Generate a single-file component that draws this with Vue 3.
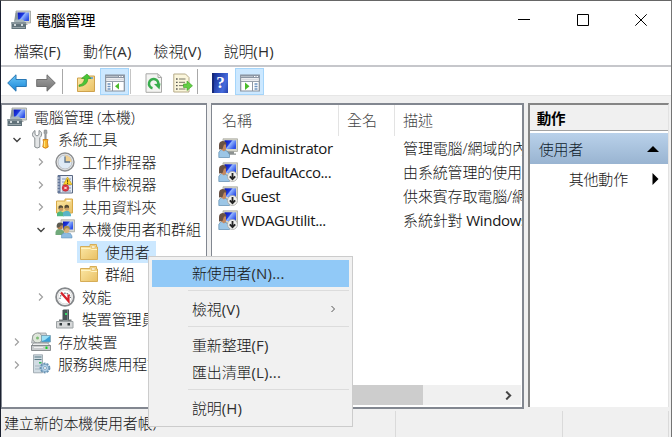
<script setup>
const menus = [['檔案', '(F)'], ['動作', '(A)'], ['檢視', '(V)'], ['說明', '(H)']]
const tree = [
  { level: 0, icon: 'computer', label: '電腦管理 (本機)' },
  { level: 1, icon: 'tools', label: '系統工具', state: 'open' },
  { level: 2, icon: 'clock', label: '工作排程器', state: 'closed' },
  { level: 2, icon: 'event', label: '事件檢視器', state: 'closed' },
  { level: 2, icon: 'share', label: '共用資料夾', state: 'closed' },
  { level: 2, icon: 'users', label: '本機使用者和群組', state: 'open' },
  { level: 3, icon: 'folder', label: '使用者', selected: true },
  { level: 3, icon: 'folder', label: '群組' },
  { level: 2, icon: 'perf', label: '效能', state: 'closed' },
  { level: 2, icon: 'device', label: '裝置管理員' },
  { level: 1, icon: 'storage', label: '存放裝置', state: 'closed' },
  { level: 1, icon: 'services', label: '服務與應用程式', state: 'closed' },
]
const users = [
  { name: 'Administrator', desc: '管理電腦/網域的內', icon: 'user' },
  { name: 'DefaultAcco...', desc: '由系統管理的使用', icon: 'userdown' },
  { name: 'Guest', desc: '供來賓存取電腦/網', icon: 'userdown' },
  { name: 'WDAGUtilit...', desc: '系統針對 ', latin: 'Windows', icon: 'userdown' },
]
const context = [
  { label: '新使用者', key: '(N)...', active: true },
  { sep: true },
  { label: '檢視', key: '(V)', sub: true },
  { sep: true },
  { label: '重新整理', key: '(F)' },
  { label: '匯出清單', key: '(L)...' },
  { sep: true },
  { label: '說明', key: '(H)' },
]
</script>

<template>
  <div class="window">
    <svg class="defs" width="0" height="0">
      <defs>
        <linearGradient id="gBlue" x1="0" y1="0" x2="1" y2="0.6">
          <stop offset="0" stop-color="#0a14b4" /><stop offset="0.45" stop-color="#1c38e0" /><stop offset="0.55" stop-color="#8fb2ff" /><stop offset="1" stop-color="#2f52e8" />
        </linearGradient>
        <linearGradient id="gFolder" x1="0" y1="0" x2="1" y2="1">
          <stop offset="0" stop-color="#fdeaaa" /><stop offset="1" stop-color="#e9c063" />
        </linearGradient>
        <linearGradient id="gBack" x1="0" y1="0" x2="0" y2="1">
          <stop offset="0" stop-color="#6cc8f8" /><stop offset="1" stop-color="#1583d6" />
        </linearGradient>
        <linearGradient id="gFwd" x1="0" y1="0" x2="0" y2="1">
          <stop offset="0" stop-color="#a5a5a5" /><stop offset="1" stop-color="#707070" />
        </linearGradient>
      </defs>
      <symbol id="computer" viewBox="0 0 20 20">
        <path d="M5 1h14.500v12H5z" fill="#d3d5cf" stroke="#9a9f9c" stroke-width=".8" />
        <path d="M6.500 2.500h11.500v8.500H6.500z" fill="url(#gBlue)" />
        <path d="M4.500 3l1.500-1 1 7-4 3z" fill="#8a9799" />
        <path d="M9 13h6l2 2H7z" fill="#a4a8a8" />
        <path d="M3 12l2-2.500h7l2 2.500z" fill="#a8b6ba" />
        <path d="M.5 12h14.500v7H.5z" fill="#61727a" />
        <path d="M.5 12h14.500v2H.5z" fill="#849298" />
        <path d="M3 14h2v2H3zM10 14h2v2h-2z" fill="#d0d8da" />
        <path d="M1.500 17.500h12.500" stroke="#98a5aa" stroke-width="1" />
      </symbol>
      <symbol id="tools" viewBox="0 0 20 20">
        <path d="M3 1.500v4l2 1.500 2-1.500v-4c2 .8 3 2.300 2.500 4.500-.3 1.500-1 2-1.700 2.700V18q-2.800 2-5 0V9C.8 8 0 6 .8 4q.6-1.700 2.200-2.500z" transform="translate(1 0)" fill="#e3e5e6" stroke="#7c8286" stroke-width=".9" />
        <path d="M13.300 1h2.400l.4 3-.9 1.500V11h-1.400V5.500l-.9-1.500z" fill="#a0a5a8" stroke="#777" stroke-width=".5" />
        <path d="M12 10.500h5l-.6 2.500.8 5q-2.700 2.500-5.400 0l.8-5z" fill="#f8b52c" stroke="#ca7710" stroke-width=".8" />
        <path d="M13.500 12v6" stroke="#ffe67d" stroke-width="1.200" />
      </symbol>
      <symbol id="clock" viewBox="0 0 20 20">
        <circle cx="10" cy="10" r="9" fill="#ebecec" stroke="#8b8d8f" stroke-width="1.400" />
        <circle cx="10" cy="10" r="7" fill="#dfeaf5" stroke="#b0b3b6" stroke-width=".8" />
        <path d="M10 3.300a6.700 6.700 0 0 1 6.700 6.700H10z" fill="#efcf91" />
        <path d="M10 4.500V10h5" fill="none" stroke="#59728c" stroke-width="1.300" />
      </symbol>
      <symbol id="event" viewBox="0 0 20 20">
        <path d="M3 1.500h14.500v17.500H3z" fill="#e4eaf3" stroke="#5a6983" stroke-width="1" />
        <path d="M3 1.500h2.500v17.500H3z" fill="#63779b" />
        <path d="M1.500 4h3M1.500 7h3M1.500 10h3M1.500 13h3M1.500 16h3" stroke="#d9dee5" stroke-width="1.200" />
        <path d="M7 5h9M7 8h9M7 11h9M7 14h9M7 17h9" stroke="#8497b8" stroke-width="1" />
        <path d="M12.500 3l4.500 7.500H8.500z" fill="#ffd42c" stroke="#c59b08" stroke-width=".6" />
        <path d="M12.600 5.500v3M12.600 9v1" stroke="#53430a" stroke-width="1" />
        <circle cx="10.500" cy="14" r="3.300" fill="#d93542" stroke="#b51d2b" stroke-width=".5" />
        <path d="M9.300 12.800l2.400 2.400M11.700 12.800l-2.400 2.400" stroke="#fff" stroke-width="1" />
      </symbol>
      <symbol id="folder" viewBox="0 0 20 20">
        <path d="M1.500 4.500H11V2.500h6.500v2.500H18.500v12.500H1.500z" fill="url(#gFolder)" stroke="#d6ad57" stroke-width="1" />
        <path d="M12.500 4h3.500v2h-3.500z" fill="#fffdf0" stroke="#d6ad57" stroke-width=".5" />
        <path d="M2 6.500h9l1.500 1H18" stroke="#fff4c4" stroke-width="1" fill="none" />
      </symbol>
      <symbol id="share" viewBox="0 0 20 20">
        <path d="M1.500 4H10V2h7.500v14H1.500z" fill="url(#gFolder)" stroke="#d7a947" stroke-width="1" />
        <path d="M11.500 3.700h4" stroke="#fff" stroke-width="1.500" />
        <circle cx="6" cy="12" r="2.300" fill="#c79a63" /><path d="M3.500 12V9.500q2-2.500 4.500 0V11l-2-.5z" fill="#534b38" />
        <circle cx="12" cy="11.500" r="2.300" fill="#c99f67" /><path d="M9.500 11.500V9q2-2.500 4.500 0v2l-2-.5z" fill="#554a35" />
        <path d="M2 19.300v-3q2-2.500 4-2l3 2v3z" fill="#50b781" /><path d="M8 19.300v-4q3-2.500 6-1l2 3v2z" fill="#5ab4c6" />
      </symbol>
      <symbol id="users" viewBox="0 0 20 20">
        <path d="M6 .8h13.500v12H6z" fill="#d9dad1" stroke="#a6a69e" stroke-width=".8" />
        <path d="M8 2.500h10v8H8z" fill="url(#gBlue)" />
        <path d="M.5 16v-3q1-3.500 4.500-3l4 2v4z" fill="#71a97b" />
        <circle cx="5" cy="7.500" r="2.900" fill="#b98552" /><path d="M1.700 8.500q-.5-5 3.300-5 3.500 0 3.500 3L6 6.500l-2 2z" fill="#5c5a50" />
        <path d="M6.500 19v-3q1-2.500 5-2.500l4 1 1.500 2.500v2z" fill="#8dbbe1" stroke="#5689b5" stroke-width=".5" />
        <circle cx="11.500" cy="11" r="2.900" fill="#d9b37d" /><path d="M8.300 11q0-4.500 3.500-4.200 3.200.3 3 3.500l-2-1-2 0-1.500 2.500z" fill="#a68d4e" />
      </symbol>
      <symbol id="perf" viewBox="0 0 20 20">
        <circle cx="10" cy="10" r="8.900" fill="#fff" stroke="#85888b" stroke-width="1.800" />
        <circle cx="10" cy="10" r="7" fill="#fff" stroke="#cecece" stroke-width=".8" />
        <path d="M5 12a5.200 5.200 0 0 1 10.500-1" fill="none" stroke="#717c82" stroke-width="1.300" stroke-dasharray="1.500 1" />
        <path d="M6 5.500L13.500 14V7.500" fill="none" stroke="#d51f29" stroke-width="2.200" />
      </symbol>
      <symbol id="device" viewBox="0 0 20 20">
        <path d="M7.500 1.500l1-1h5.500v11h-6.500z" fill="#485356" /><path d="M12.500 1v10" stroke="#758083" />
        <path d="M10 4h2v2h-2z" fill="#35db68" />
        <path d="M4 10.500h4v1h5v-1h3.500v2.500h-12.500z" fill="#757b7d" />
        <path d="M1.500 12.500h16.500v6.500h-16.500z" fill="#d6d8d9" stroke="#9ca2a4" stroke-width="1" />
        <path d="M4.500 14h2.500v2.500h-2.500zM12.500 14h2.500v2.500h-2.500z" fill="#30383b" />
      </symbol>
      <symbol id="storage" viewBox="0 0 20 20">
        <path d="M2 3l5-2h8l3 10H.5z" fill="#d0d3d5" stroke="#9b9fa1" stroke-width=".8" />
        <circle cx="6.500" cy="6" r="5" fill="#dfe6db" stroke="#888e8b" stroke-width=".8" /><circle cx="6.500" cy="6" r="1.500" fill="#7fbf76" />
        <path d="M10.500 3.500h9v6.500h-9z" fill="#3a9ed5" stroke="#7c9eac" stroke-width=".7" /><path d="M11 4h8l-5 4-3 1z" fill="#9bdff5" />
        <path d="M2.500 11h14l3 3H.5z" fill="#eceded" stroke="#858b8e" stroke-width=".8" />
        <path d="M.5 13.500h19v5H.5z" fill="#c8cbcd" stroke="#73797b" stroke-width=".8" />
        <path d="M14.500 14.500h2v2.500h-2z" fill="#18d225" /><path d="M3 15.500h9" stroke="#eff0f0" />
      </symbol>
      <symbol id="services" viewBox="0 0 20 20">
        <path d="M2.500.8h9v18h-9z" fill="#d1dce3" stroke="#929da5" stroke-width=".8" />
        <path d="M3.500 3h7M3.500 5.500h7" stroke="#557681" stroke-width="1.200" /><path d="M8 8h2.500v1.500h-2.500z" fill="#31b55b" /><path d="M4 12h7M4 15h7" stroke="#a5b5c0" />
        <circle cx="14" cy="14" r="4.400" fill="#b4d1e8" stroke="#6893b3" stroke-width="2" stroke-dasharray="2 1.100" />
        <circle cx="14" cy="14" r="3.600" fill="#b7d5ed" stroke="#7199b8" stroke-width=".7" /><circle cx="14" cy="14" r="1.500" fill="#fff" stroke="#6b90ad" stroke-width=".7" />
      </symbol>
      <symbol id="user" viewBox="0 0 20 20">
        <path d="M5 .8h14.500v12.700H5z" fill="#d4d4c9" stroke="#aaa99e" stroke-width=".8" />
        <path d="M6.500 2.300h11.500v8.700H6.500z" fill="url(#gBlue)" /><path d="M10 13.500h6v2h2v1.200H9z" fill="#8c9190" />
        <path d="M.8 19.500v-5q1-3 4.200-3.500l4.500 2.500 2 3v3z" fill="#9cc6e6" stroke="#497ca3" stroke-width=".6" />
        <path d="M3 6h5v5.500l-2 2-3-2z" fill="#c48960" />
        <path d="M1 11.500V7q0-3.500 3.500-4 4 0 4 3.500L6 6.500 4.500 11z" fill="#6a5245" />
      </symbol>
      <symbol id="userdown" viewBox="0 0 20 20">
        <use href="#user" /><circle cx="14.500" cy="14.500" r="5" fill="#f1f1ee" stroke="#a8a8a4" stroke-width=".8" />
        <path d="M14.500 11v6M11.800 14.300l2.700 2.900 2.700-2.900" fill="none" stroke="#252525" stroke-width="1.800" />
      </symbol>
      <symbol id="back" viewBox="0 0 20 20">
        <path d="M.7 10L9 1.800V6.500H19.300v7H9v4.700z" fill="url(#gBack)" stroke="#2877b4" stroke-width="1" stroke-linejoin="round" />
      </symbol>
      <symbol id="forward" viewBox="0 0 20 20">
        <path d="M19.300 10L11 1.800V6.500H.7v7H11v4.700z" fill="url(#gFwd)" stroke="#717171" stroke-width="1" stroke-linejoin="round" />
      </symbol>
      <symbol id="up" viewBox="0 0 20 20">
        <path d="M1.500 5H9l2-2h7.500v15.500H1.500z" fill="url(#gFolder)" stroke="#cfa24d" stroke-width="1" />
        <path d="M13 4h4v2h-4z" fill="#7aa7d4" />
        <path d="M3 12q5-1 5.500-6.500H5.500L11 1l4 4.500h-3q-.5 7.500-9 8z" fill="#4ac636" stroke="#329522" stroke-width=".6" />
      </symbol>
      <symbol id="pane" viewBox="0 0 20 20">
        <path d="M.7 2h18.600v16H.7z" fill="#fff" stroke="#858f9b" stroke-width="1.200" />
        <path d="M.7 2h18.600v3H.7z" fill="#8c96a4" /><path d="M1 3.500h12" stroke="#c3c9d1" stroke-width=".8" /><path d="M14 3.500h1.500M16.500 3.500h1.500" stroke="#fff" />
        <path d="M1.500 5.500h17v2h-17z" fill="#d8dbe0" /><path d="M1 8.500h18" stroke="#98a1ac" />
        <path d="M7.500 9v9" stroke="#8e97a3" /><path d="M2.500 11h3M2.500 13.500h3M2.500 16h3" stroke="#6c92bf" stroke-width="1.300" />
        <path d="M14 10v6.500L10 13.200z" fill="#4bbc2b" />
      </symbol>
      <symbol id="pane2" viewBox="0 0 20 20">
        <path d="M.7 2h18.600v16H.7z" fill="#fff" stroke="#858f9b" stroke-width="1.200" />
        <path d="M.7 2h18.600v3H.7z" fill="#8c96a4" /><path d="M1 3.500h12" stroke="#c3c9d1" stroke-width=".8" /><path d="M14 3.500h1.500M16.500 3.500h1.500" stroke="#fff" />
        <path d="M1.500 5.500h17v2h-17z" fill="#d8dbe0" /><path d="M1 8.500h18" stroke="#98a1ac" />
        <path d="M12.500 9v9" stroke="#8e97a3" /><path d="M14.500 11h3M14.500 13.500h3M14.500 16h3" stroke="#6c92bf" stroke-width="1.300" />
        <path d="M5 9.500v7.500l4.500-3.700z" fill="#4bbc2b" />
      </symbol>
      <symbol id="refresh" viewBox="0 0 20 20">
        <path d="M2 .8h12l3.500 3.500v15H2z" fill="#f4f4f2" stroke="#a9a9a7" stroke-width="1" /><path d="M14 1v3.500h3.500" fill="none" stroke="#a9a9a7" />
        <path d="M8.500 15.300A4.700 4.700 0 1 1 14.200 12" fill="none" stroke="#39ad4e" stroke-width="2.500" />
        <path d="M10 11l6.500-.5-1 6z" fill="#39ad4e" />
      </symbol>
      <symbol id="export" viewBox="0 0 20 20">
        <path d="M.8 1h11.700L16 4.500V19H.8z" fill="#fbf6dc" stroke="#b5aa88" stroke-width="1" />
        <path d="M6 6h6.500M6 9.300h6M6 12.600h5M6 16h6.500" stroke="#777766" stroke-width="1" /><path d="M3.200 6h1.300M3.200 9.300h1.300M3.200 12.600h1.300M3.200 16h1.300" stroke="#333" stroke-width="1.300" />
        <path d="M10.500 11h3.500V8l5.500 4.800L14 17.500v-3h-3.500z" fill="#62ce44" stroke="#3aa126" stroke-width=".6" />
      </symbol>
    </svg>

    <header class="titlebar">
      <svg class="app-icon"><use href="#computer" /></svg>
      <span class="title">電腦管理</span>
      <div class="controls">
        <svg viewBox="0 0 12 12"><path d="M0 5.500h12" /></svg>
        <svg viewBox="0 0 12 12"><path d="M.5.500h11v11h-11z" /></svg>
        <svg viewBox="0 0 12 12"><path d="M.3.300l11.400 11.400M11.700.300L.3 11.700" /></svg>
      </div>
    </header>

    <nav class="menubar"><span v-for="m in menus" :key="m[1]">{{ m[0] }}<span class="key">{{ m[1] }}</span></span></nav>

    <div class="toolbar">
      <span class="tool arrow"><svg><use href="#back" /></svg></span>
      <span class="tool arrow"><svg><use href="#forward" /></svg></span>
      <i class="divider"></i>
      <span class="tool"><svg><use href="#up" /></svg></span>
      <span class="tool on"><svg><use href="#pane" /></svg></span>
      <i class="divider tight"></i>
      <span class="tool"><svg><use href="#refresh" /></svg></span>
      <span class="tool"><svg><use href="#export" /></svg></span>
      <i class="divider close"></i>
      <span class="tool help"><b>?</b></span>
      <span class="tool on last"><svg><use href="#pane2" /></svg></span>
    </div>

    <main class="body">
      <section class="tree">
        <div v-for="n in tree" :key="n.label" class="node" :class="['l' + n.level, { selected: n.selected }]">
          <span v-if="n.level" class="twist">
            <svg v-if="n.state" :class="n.state" viewBox="0 0 8 8"><path d="M2 .5L5.500 4 2 7.500" /></svg>
          </span>
          <span class="pick">
            <span class="ico"><svg><use :href="'#' + n.icon" /></svg></span>
            <span class="label">{{ n.label }}</span>
          </span>
        </div>
      </section>

      <section class="list">
        <div class="head"><span>名稱</span><span>全名</span><span>描述</span></div>
        <div v-for="u in users" :key="u.name" class="row">
          <svg><use :href="'#' + u.icon" /></svg>
          <span class="name">{{ u.name }}</span>
          <span class="desc">{{ u.desc }}<span v-if="u.latin" class="latin">{{ u.latin }}</span></span>
        </div>
        <div class="scroll">
          <i class="thumb"></i>
          <svg viewBox="0 0 8 8"><path d="M2 .5L5.500 4 2 7.500" /></svg>
        </div>
      </section>

      <aside class="actions">
        <h2>動作</h2>
        <div class="group"><span>使用者</span><svg viewBox="0 0 12 6"><path d="M0 6L6 0l6 6z" /></svg></div>
        <div class="more"><span>其他動作</span><svg viewBox="0 0 6 12"><path d="M0 0l6 6-6 6z" /></svg></div>
      </aside>
    </main>

    <footer class="status">
      <span>建立新的本機使用者帳戶</span><i></i><i></i><i></i>
    </footer>

    <div class="context">
      <template v-for="(c, i) in context" :key="i">
        <div v-if="c.sep" class="sep"></div>
        <div v-else class="item" :class="{ active: c.active }">
          <span>{{ c.label }}<span class="key">{{ c.key }}</span></span>
          <svg v-if="c.sub" viewBox="0 0 8 8"><path d="M2.500 1L5.500 4l-3 3" /></svg>
        </div>
      </template>
    </div>
  </div>
</template>

<style>
body { margin: 0; overflow: hidden; }
</style>

<style scoped>
* { box-sizing: border-box; }
.window {
  position: relative; display: flex; flex-direction: column;
  width: 672px; height: 437px; overflow: hidden;
  background: #f0f0f0; color: #161616;
  border-left: 1px solid #1b2130; border-top: 1px solid #666; border-right: 1px solid #747474;
  font: 300 15px/22px "Open Sans", "Noto Sans CJK TC", sans-serif;
  letter-spacing: -0.15px; white-space: nowrap;
}
.defs { position: absolute; }
svg { display: block; flex: none; }
.key { font-weight: 400; color: #2e2e2e; letter-spacing: 0.2px; }
.titlebar { display: flex; align-items: center; height: 38px; padding: 0 24px 0 10px; background: #fff; color: #000; }
.app-icon { width: 20px; height: 20px; }
.title { margin-left: 5px; font-weight: 400; }
.controls { display: flex; gap: 46.5px; margin-left: auto; }
.controls svg { width: 12px; height: 12px; fill: none; stroke: #000; stroke-width: 1; }
.menubar { display: flex; gap: 22px; height: 29px; padding: 1px 0 0 13px; background: #fff; border-bottom: 2px solid #c6c7cb; }
.toolbar { display: flex; align-items: center; height: 29px; padding: 1px 0 0 2px; background: #fff; border-bottom: 1px solid #e6e6e6; }
.tool { display: flex; align-items: center; justify-content: center; width: 29px; height: 27px; padding-top: 2px; }
.tool svg { width: 20px; height: 20px; }
.arrow { padding-right: 1px; }
.tool.on { background: #cce8ff; border: 1px solid #a5d5fa; }
.divider { width: 1px; height: 25px; margin: 0 8px 0 1px; background: #a8a8a8; }
.tool.on + .divider { background: #c5c5c5; }
.divider.tight { margin: 0 8px 0 1px; }
.divider.close { margin: 0 7px 0 0; }
.help b { width: 16px; height: 20px; background: linear-gradient(110deg, #142d94, #456bdc 70%, #243fa8); border-left: 2px solid #162879; color: #fff; font: bold 17px/20px "Liberation Serif", serif; text-align: center; }
.last { margin-left: 1px; }
.body { display: flex; gap: 4px; height: 313px; padding: 7px 2px 0 0; }
.tree { width: 207px; height: 306px; border: 1px solid #828790; border-top-width: 2px; border-bottom-width: 2px; background: #fff; overflow: hidden; }
.node { display: flex; height: 22.5px; padding-left: 3px; align-items: center; }
.l2 { padding-left: 27px; }
.l3 { padding-left: 51px; }
.twist { display: flex; width: 24px; justify-content: center; }
.twist svg { width: 8px; height: 8px; margin-top: 1px; fill: none; stroke: #a0a0a0; stroke-width: 1.2; }
.twist svg.open { transform: rotate(90deg); stroke: #404040; stroke-width: 1.4; }
.pick { display: flex; align-items: center; height: 22px; }
.ico { display: flex; width: 24px; justify-content: center; }
.ico svg { width: 20px; height: 20px; }
.label { padding: 0 5px; }
.l3 .label { padding: 0 6px 0 4px; }
.selected .pick { background: #cce8ff; }
.list { display: flex; flex-direction: column; width: 314px; height: 306px; border: 1px solid #828790; border-top-width: 2px; border-right-width: 2px; border-bottom-width: 2px; background: #fff; overflow: hidden; }
.head { display: flex; height: 31px; color: #444; line-height: 31px; }
.head span { border-right: 1px solid #e3e3e3; padding-left: 8px; width: 56px; }
.head span:first-child { width: 127px; padding-left: 10px; }
.head span:last-child { flex: 1; border: 0; }
.row { display: flex; align-items: center; height: 24px; padding-left: 6px; }
.row svg { width: 20px; height: 20px; }
.name { flex: none; width: 165px; padding-left: 3px; font-weight: 400; letter-spacing: -0.4px; }
.desc { flex: 1; min-width: 0; overflow: hidden; }
.latin { font-weight: 400; letter-spacing: -0.3px; }
.scroll { display: flex; align-items: center; height: 20px; margin: auto 1px 2px 0; background: #f0f0f0; }
.thumb { width: 194px; height: 20px; margin-left: 17px; background: #cdcdcd; }
.scroll svg { width: 9px; height: 9px; margin-left: auto; margin-right: 8px; fill: none; stroke: #444; stroke-width: 1.8; }
.actions { width: 142px; height: 304px; background: #fff; border-left: 2px solid #858585; border-top: 2px solid #858585; border-right: 1px solid #e2e2e2; }
.actions h2 { height: 26px; margin: 0; padding-left: 7px; font-size: 14.5px; line-height: 28px; background: #f0f0f0; border-bottom: 1px solid #a3a3a3; color: #000; }
.group { display: flex; align-items: center; justify-content: space-between; height: 31px; margin-top: 2px; padding: 0 9px; background: linear-gradient(#b9d1ea, #99b4d1); color: #101c2d; }
.group svg { width: 12px; height: 6px; fill: #000; }
.more { display: flex; align-items: center; justify-content: space-between; height: 29px; padding: 0 9px 0 39px; }
.more svg { width: 7px; height: 12px; fill: #000; }
.status { display: flex; height: 28px; padding: 2px 2px 0 3px; line-height: 25px; }
.status span { width: 391px; }
.status i { width: 167px; border-left: 1px solid #dadada; }
.status i:nth-of-type(2) { width: 106px; }
.status i:last-child { width: 1px; }
.context { position: absolute; left: 147px; top: 255px; width: 205px; height: 171px; padding: 3px; background: #f1f1f1; border: 1px solid #ccc; }
.item { display: flex; align-items: center; justify-content: space-between; height: 27px; padding: 0 12px 2px 40px; }
.item.active { background: #91c9f7; }
.item svg { width: 8px; height: 8px; fill: none; stroke: #555; stroke-width: 1; }
.sep { height: 9px; margin-left: 36px; background: linear-gradient(#dcdcdc, #dcdcdc) 0 3px / 100% 1px no-repeat; }
</style>
